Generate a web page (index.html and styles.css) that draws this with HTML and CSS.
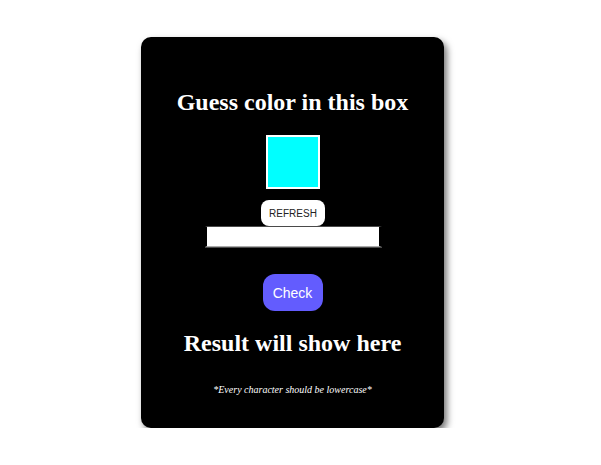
FILE: index.html
```html
<!DOCTYPE html>
<html>
<head>
<meta charset="utf-8">
<link rel="stylesheet" href="styles.css">
</head>
<body>
<div class="page">
  <div class="card">
    <h2 class="title">Guess color in this box</h2>
    <div class="swatch"></div>
    <button class="refresh">REFRESH</button>
    <input class="guess" type="text">
    <button class="check">Check</button>
    <h2 class="result">Result will show here</h2>
    <p class="note">*Every character should be lowercase*</p>
  </div>
</div>
</body>
</html>
```
FILE: styles.css
```css
html, body {
  margin: 0;
  padding: 0;
  background: #fff;
}
.page {
  display: flex;
  justify-content: flex-start;
  padding: 37px 0 0 141px;
}
.card {
  width: 303px;
  height: 391px;
  box-sizing: border-box;
  background: #000;
  border-radius: 10px;
  box-shadow: 3px 4px 7px rgba(0,0,0,0.55);
  display: flex;
  flex-direction: column;
  align-items: center;
  font-family: "Liberation Serif", "Times New Roman", serif;
  color: #fff;
}
.title {
  margin: 51px 0 0 0;
  font-size: 24px;
  font-weight: bold;
  line-height: 28px;
}
.swatch {
  margin-top: 19px;
  margin-left: 1px;
  width: 50px;
  height: 50px;
  background: #00ffff;
  border: 2px solid #fff;
}
.refresh {
  margin-top: 11px;
  margin-left: 1px;
  width: 64px;
  height: 26px;
  background: #fff;
  border: none;
  border-radius: 8px;
  font-family: "Liberation Sans", Arial, sans-serif;
  font-size: 10px;
  color: #222;
  padding: 0;
}
.guess {
  margin-top: 0;
  width: 177px;
  height: 21px;
  box-sizing: border-box;
  border-left: 2px solid #000;
  border-right: 3px solid #000;
  border-top: 1px solid #4a4a4a;
  border-bottom: 1px solid #aaa;
  box-shadow: 0 1px 0 #4a4a4a;
  background: #fff;
  padding: 0;
  margin-left: 2px;
  margin-bottom: 1px;
}
.check {
  margin-top: 26px;
  width: 60px;
  height: 37px;
  background: #635cfe;
  color: #fff;
  border: none;
  border-radius: 12px;
  font-family: "Liberation Sans", Arial, sans-serif;
  font-size: 14px;
  padding: 0;
}
.result {
  margin: 18px 0 0 0;
  font-size: 24px;
  font-weight: bold;
  line-height: 28px;
}
.note {
  margin: 27px 0 0 0;
  font-size: 10px;
  font-style: italic;
}
```
